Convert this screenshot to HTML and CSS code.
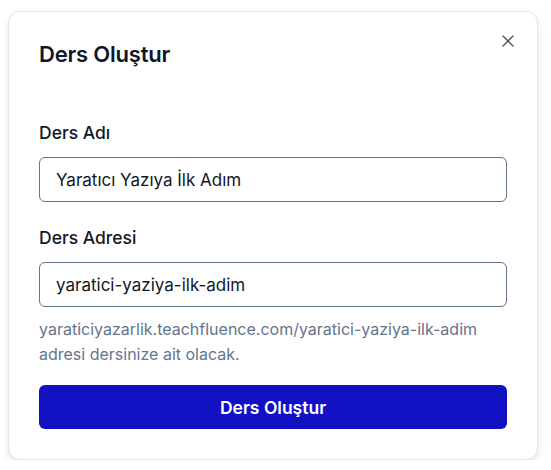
FILE: index.html
```html
<!DOCTYPE html>
<html lang="tr">
<head>
<meta charset="utf-8">
<link rel="stylesheet" href="styles.css">
</head>
<body>
<div class="card">
  <div class="header">
    <h2 class="title">Ders Oluştur</h2>
    <button class="close" aria-label="Kapat">
      <svg width="12" height="12" viewBox="0 0 12 12"><path d="M1 1L11 11M11 1L1 11" stroke="#4b5563" stroke-width="1.4" stroke-linecap="round"/></svg>
    </button>
  </div>
  <div class="field">
    <label class="label">Ders Adı</label>
    <div class="input">Yaratıcı Yazıya İlk Adım</div>
  </div>
  <div class="field second">
    <label class="label">Ders Adresi</label>
    <div class="input">yaratici-yaziya-ilk-adim</div>
    <p class="help">yaraticiyazarlik.teachfluence.com/yaratici-yaziya-ilk-adim adresi dersinize ait olacak.</p>
  </div>
  <button class="submit">Ders Oluştur</button>
</div>
</body>
</html>
```
FILE: styles.css
```css
* { box-sizing: border-box; }
html, body { margin: 0; background: #ffffff; }
body {
  padding: 11px 13px 0 8px;
  font-family: Inter, "Noto Sans", sans-serif;
  color: #111827;
}
.card {
  width: 530px;
  height: 449px;
  border: 1px solid #e5e7eb;
  border-radius: 12px;
  background: #fff;
  padding: 28px 30px 30px 30px;
  box-shadow: 0 4px 10px rgba(15, 23, 42, 0.08), 0 1px 3px rgba(15, 23, 42, 0.05);
  display: flex;
  flex-direction: column;
}
.header {
  display: flex;
  justify-content: space-between;
  align-items: flex-start;
}
.title {
  margin: 0;
  font-size: 22px;
  line-height: 28px;
  font-weight: 600;
  color: #0f172a;
  letter-spacing: -0.2px;
}
.close {
  border: 0;
  background: none;
  padding: 0;
  margin: -5px -7px 0 0;
  width: 12px;
  height: 12px;
  display: flex;
}
.field { display: flex; flex-direction: column; margin-top: 53px; }
.field.second { margin-top: 24px; }
.label {
  font-size: 17.5px;
  line-height: 24px;
  font-weight: 500;
  color: #111827;
  margin-bottom: 12px;
}
.input {
  height: 45px;
  border: 1px solid #64748b;
  border-radius: 6px;
  padding: 0 16px;
  display: flex;
  align-items: center;
  font-size: 17px;
  color: #111827;
}
.help {
  margin: 10px 0 0 0;
  font-size: 16px;
  line-height: 25px;
  color: #64748b;
}
.submit {
  margin-top: 18px;
  height: 44px;
  border: 0;
  border-radius: 6px;
  background: #1212c4;
  color: #fff;
  font-family: Inter, "Noto Sans", sans-serif;
  font-size: 17.5px;
  font-weight: 600;
}
```
